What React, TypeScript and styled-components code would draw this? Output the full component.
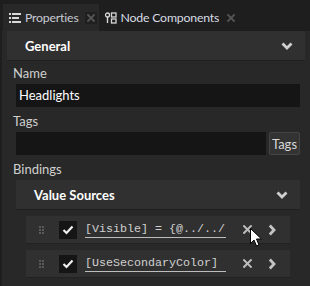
import styled, { createGlobalStyle } from 'styled-components';

const GlobalStyle = createGlobalStyle`
    html, body {
        margin: 0;
        padding: 0;
        background: #1e1e1e;
    }
    * {
        box-sizing: border-box;
    }
`;

const Window = styled.div`
    width: 310px;
    height: 286px;
    overflow: hidden;
    display: flex;
    flex-direction: column;
    background: #1e1e1e;
    font-family: 'Lato', 'Open Sans', sans-serif;
    font-size: 13px;
    color: #d4d4d4;
`;

const TabBar = styled.div`
    height: 31px;
    display: flex;
    align-items: flex-end;
    padding-left: 3px;
    flex-shrink: 0;
`;

const Tab = styled.div<{ $active?: boolean }>`
    height: 27px;
    display: flex;
    align-items: center;
    gap: 4px;
    padding: 0 2px 0 6px;
    background: ${({ $active }) => ($active ? '#282828' : 'transparent')};
    color: ${({ $active }) => ($active ? '#c8ccd4' : '#d8dce4')};
    font-size: 12.3px;
    letter-spacing: -0.2px;

    .close {
        width: 12px;
        height: 12px;
        margin-left: 2px;
        display: flex;
        align-items: center;
        justify-content: center;
        background: ${({ $active }) => ($active ? '#1f1f1f' : 'transparent')};
    }
`;

const Panel = styled.div`
    flex: 1;
    margin-left: 2px;
    background: #282828;
    padding: 0 5px 0 5px;
    display: flex;
    flex-direction: column;
`;

const GroupHeader = styled.div`
    height: 30px;
    flex-shrink: 0;
    display: flex;
    align-items: center;
    justify-content: space-between;
    background: #303030;
    border-bottom: 1px solid #1f1f1f;
    padding: 0 12px 0 18px;
    color: #ffffff;
    font-weight: 700;
    font-size: 13px;
`;

const Body = styled.div`
    display: flex;
    flex-direction: column;
    padding: 0 5px 0 6px;
`;

const Label = styled.div<{ $top: number }>`
    margin-top: ${({ $top }) => $top}px;
    height: 17px;
    line-height: 17px;
    color: #cfcfcf;
    font-size: 13px;
`;

const Field = styled.div`
    display: flex;
    gap: 3px;
    margin-top: 2px;
    padding-left: 3px;
`;

const Input = styled.div`
    flex: 1;
    height: 23px;
    background: #151515;
    color: #ffffff;
    font-size: 13px;
    line-height: 23px;
    padding-left: 3px;
`;

const SmallButton = styled.div`
    width: 31px;
    height: 23px;
    background: #333333;
    border: 1px solid #444444;
    border-radius: 2px;
    color: #d8d8d8;
    font-size: 13px;
    display: flex;
    align-items: center;
    justify-content: center;
`;

const Sources = styled.div`
    margin-top: 2px;
    margin-left: 3px;
    display: flex;
    flex-direction: column;
`;

const SourceList = styled.div`
    display: flex;
    flex-direction: column;
    gap: 6px;
    padding: 6px 10px 0 10px;
`;

const SourceRow = styled.div`
    position: relative;
    height: 28px;
    display: flex;
    align-items: center;
    background: #303030;
    border-bottom: 1px solid #222222;
    padding-left: 13px;
`;

const CheckBox = styled.div`
    width: 18px;
    height: 18px;
    margin-left: 15px;
    background: #151515;
    display: flex;
    align-items: center;
    justify-content: center;
`;

const Expression = styled.div`
    width: 141px;
    margin-left: 8px;
    font-family: 'Liberation Mono', 'Courier New', monospace;
    font-size: 11.67px;
    color: #d0d0d0;
    white-space: nowrap;
    overflow: hidden;
    border-bottom: 1px solid #bdbdbd;
    line-height: 16px;
`;

const IconButton = styled.div<{ $left: number }>`
    margin-left: ${({ $left }) => $left}px;
    display: flex;
    align-items: center;
`;

const Pointer = styled.svg`
    position: absolute;
    left: 224px;
    top: 12px;
`;

const ListIcon = () => (
    <svg width="12" height="10" viewBox="0 0 12 10">
        <rect x="0" y="0" width="2" height="2" fill="#d8d8d8" />
        <rect x="3" y="0" width="9" height="2" fill="#d8d8d8" />
        <rect x="0" y="4" width="2" height="2" fill="#d8d8d8" />
        <rect x="3" y="4" width="7" height="2" fill="#d8d8d8" />
        <rect x="0" y="8" width="2" height="2" fill="#d8d8d8" />
        <rect x="3" y="8" width="9" height="2" fill="#d8d8d8" />
    </svg>
);

const NodeIcon = () => (
    <svg width="12" height="12" viewBox="0 0 12 12">
        <circle cx="2.5" cy="3" r="2" fill="none" stroke="#d8d8d8" strokeWidth="1.3" />
        <rect x="1.8" y="5" width="1.4" height="6" fill="#d8d8d8" />
        <rect x="6.5" y="1" width="4.5" height="4" fill="none" stroke="#d8d8d8" strokeWidth="1.3" />
        <rect x="6.5" y="7" width="4.5" height="4" fill="none" stroke="#d8d8d8" strokeWidth="1.3" />
    </svg>
);

const CloseIcon = ({ color = '#555555', size = 8 }: { color?: string; size?: number }) => (
    <svg width={size} height={size} viewBox="0 0 8 8">
        <path d="M1 1 L7 7 M7 1 L1 7" stroke={color} strokeWidth="1.8" strokeLinecap="square" />
    </svg>
);

const ChevronDown = () => (
    <svg width="12" height="8" viewBox="0 0 12 8">
        <path d="M1.5 1.5 L6 6 L10.5 1.5" fill="none" stroke="#d0d0d0" strokeWidth="2.8" />
    </svg>
);

const ChevronRight = () => (
    <svg width="8" height="12" viewBox="0 0 8 12">
        <path d="M1.8 1.5 L6 6 L1.8 10.5" fill="none" stroke="#c4c4c4" strokeWidth="2.8" />
    </svg>
);

const Grip = () => (
    <svg width="5" height="8" viewBox="0 0 5 8">
        {[0, 3, 6].map((y) =>
            [0, 3].map((x) => <rect key={`${x}-${y}`} x={x} y={y} width="2" height="2" fill="#5a5a5a" />),
        )}
    </svg>
);

const Check = () => (
    <svg width="12" height="10" viewBox="0 0 12 10">
        <path d="M1.5 5 L4.5 8 L10.5 1.5" fill="none" stroke="#f0f0f0" strokeWidth="2.2" />
    </svg>
);

const sources = ['[Visible] = {@../../', '[UseSecondaryColor]'];

const App = () => {
    return (
        <Window>
            <GlobalStyle />
            <TabBar>
                <Tab $active>
                    <ListIcon />
                    <span>Properties</span>
                    <span className="close">
                        <CloseIcon />
                    </span>
                </Tab>
                <Tab>
                    <NodeIcon />
                    <span>Node Components</span>
                    <span className="close">
                        <CloseIcon />
                    </span>
                </Tab>
            </TabBar>
            <Panel>
                <GroupHeader>
                    <span>General</span>
                    <ChevronDown />
                </GroupHeader>
                <Body>
                    <Label $top={4}>Name</Label>
                    <Field>
                        <Input>Headlights</Input>
                    </Field>
                    <Label $top={6}>Tags</Label>
                    <Field>
                        <Input />
                        <SmallButton>Tags</SmallButton>
                    </Field>
                    <Label $top={6}>Bindings</Label>
                    <Sources>
                        <GroupHeader>
                            <span>Value Sources</span>
                            <ChevronDown />
                        </GroupHeader>
                        <SourceList>
                            {sources.map((src, index) => (
                                <SourceRow key={`source-${index}`}>
                                    <Grip />
                                    <CheckBox>
                                        <Check />
                                    </CheckBox>
                                    <Expression>{src}</Expression>
                                    <IconButton $left={17}>
                                        <CloseIcon color="#bdbdbd" size={9} />
                                    </IconButton>
                                    <IconButton $left={16}>
                                        <ChevronRight />
                                    </IconButton>
                                    {index === 0 && (
                                        <Pointer width="13" height="19" viewBox="0 0 13 19">
                                            <path
                                                d="M0.5 0.5 L0.5 15.5 L4 12 L6.5 18 L9 17 L6.5 11 L11.5 11 Z"
                                                fill="#ffffff"
                                                stroke="#000000"
                                                strokeWidth="1"
                                            />
                                        </Pointer>
                                    )}
                                </SourceRow>
                            ))}
                        </SourceList>
                    </Sources>
                </Body>
            </Panel>
        </Window>
    );
};

export default App;
